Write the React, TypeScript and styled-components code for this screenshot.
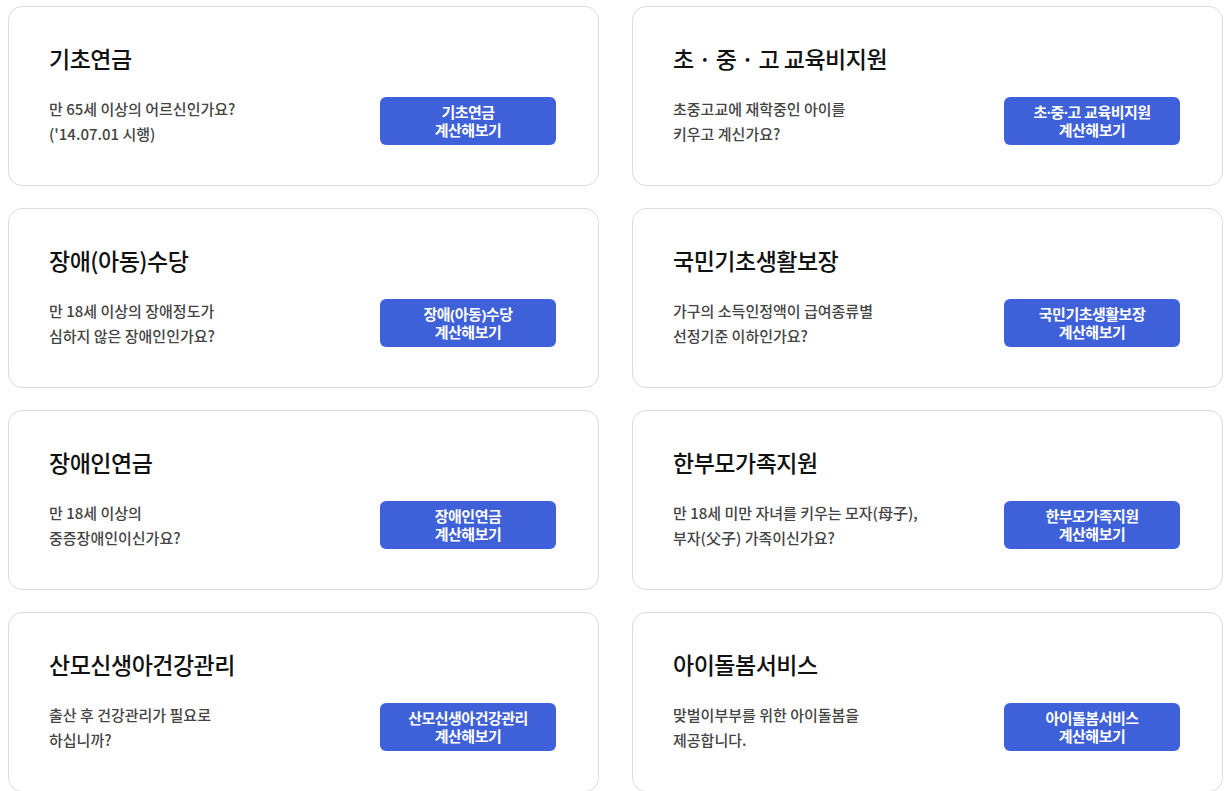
import styled, { createGlobalStyle } from 'styled-components';

const GlobalStyle = createGlobalStyle`
	body {
		margin: 0;
		background: #fff;
		font-family: 'Noto Sans CJK KR', 'Noto Sans', sans-serif;
	}
`;

type Program = {
	title: string;
	desc: string[];
	button: string;
};

const programs: Program[] = [
	{ title: '기초연금', desc: ['만 65세 이상의 어르신인가요?', "('14.07.01 시행)"], button: '기초연금' },
	{ title: '초 · 중 · 고 교육비지원', desc: ['초중고교에 재학중인 아이를', '키우고 계신가요?'], button: '초·중·고 교육비지원' },
	{ title: '장애(아동)수당', desc: ['만 18세 이상의 장애정도가', '심하지 않은 장애인인가요?'], button: '장애(아동)수당' },
	{ title: '국민기초생활보장', desc: ['가구의 소득인정액이 급여종류별', '선정기준 이하인가요?'], button: '국민기초생활보장' },
	{ title: '장애인연금', desc: ['만 18세 이상의', '중증장애인이신가요?'], button: '장애인연금' },
	{ title: '한부모가족지원', desc: ['만 18세 미만 자녀를 키우는 모자(母子),', '부자(父子) 가족이신가요?'], button: '한부모가족지원' },
	{ title: '산모신생아건강관리', desc: ['출산 후 건강관리가 필요로', '하십니까?'], button: '산모신생아건강관리' },
	{ title: '아이돌봄서비스', desc: ['맞벌이부부를 위한 아이돌봄을', '제공합니다.'], button: '아이돌봄서비스' },
];

const Grid = styled.div`
	display: grid;
	grid-template-columns: 1fr 1fr;
	gap: 22px 33px;
	padding: 6px 6px 0 8px;
`;

const Card = styled.div`
	display: flex;
	flex-direction: column;
	height: 180px;
	box-sizing: border-box;
	padding: 35px 42px 0 40px;
	border: 1px solid #dcdcdc;
	border-radius: 14px;
	background: #fff;
`;

const Title = styled.h3`
	margin: 0;
	font-size: 23px;
	line-height: 32px;
	font-weight: 500;
	color: #111;
	letter-spacing: -0.5px;
`;

const Body = styled.div`
	display: flex;
	align-items: center;
	justify-content: space-between;
	margin-top: 22px;
`;

const Desc = styled.p`
	margin: 0;
	font-size: 15px;
	line-height: 25px;
	font-weight: 500;
	color: #444;
	letter-spacing: 0;
`;

const CalcButton = styled.button`
	width: 176px;
	height: 48px;
	padding: 0;
	border: none;
	border-radius: 6px;
	background: #3e61d9;
	color: #fff;
	font-family: 'Noto Sans', 'Noto Sans CJK KR', sans-serif;
	font-size: 15px;
	font-weight: 700;
	line-height: 18px;
	letter-spacing: -0.5px;
	cursor: pointer;
`;

function ProgramCard({ item }: { item: Program }) {
	return (
		<Card>
			<Title>{item.title}</Title>
			<Body>
				<Desc>
					{item.desc[0]}
					<br />
					{item.desc[1]}
				</Desc>
				<CalcButton>
					{item.button}
					<br />
					계산해보기
				</CalcButton>
			</Body>
		</Card>
	);
}

export default function App() {
	return (
		<>
			<GlobalStyle />
			<Grid>
				{programs.map((p) => (
					<ProgramCard key={p.title} item={p} />
				))}
			</Grid>
		</>
	);
}
